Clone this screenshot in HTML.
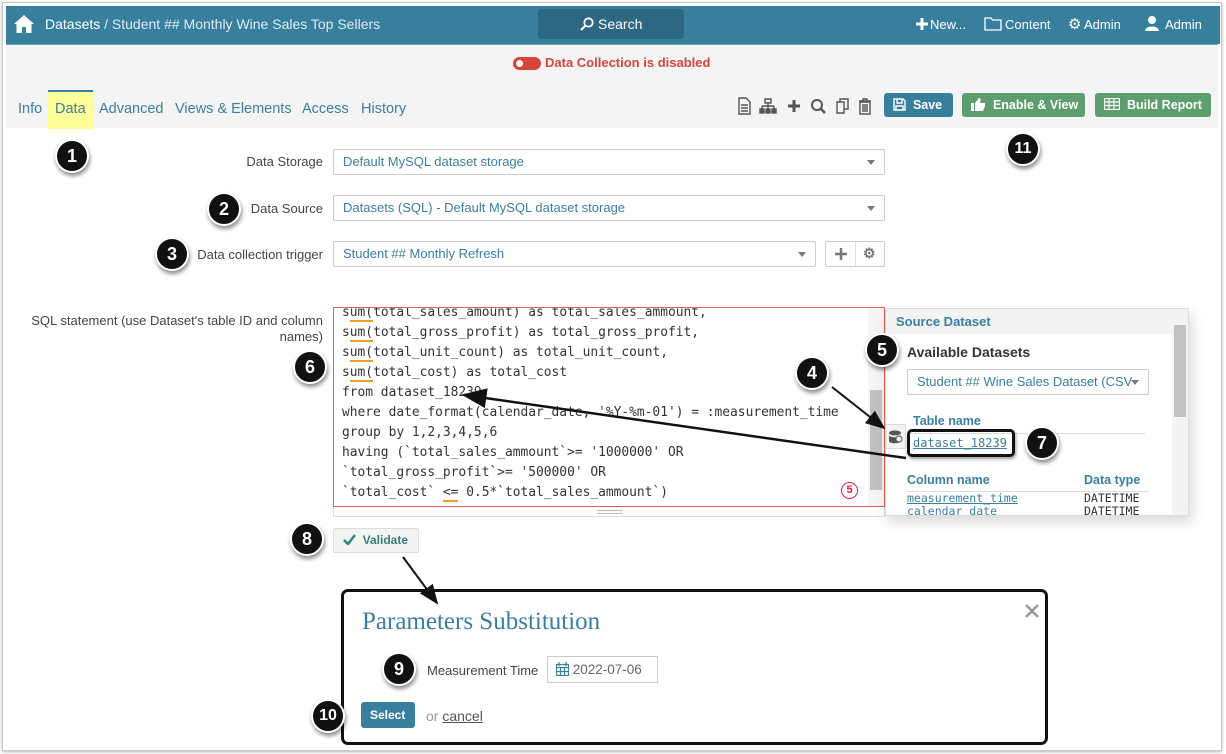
<!DOCTYPE html>
<html><head><meta charset="utf-8"><style>
*{box-sizing:border-box;margin:0;padding:0}
body{width:1226px;height:754px;background:#fff;font-family:"Liberation Sans",sans-serif;position:relative;overflow:hidden;font-size:13px;color:#444}
.abs{position:absolute}
.frame{left:2px;top:2px;width:1220px;height:749px;border:1px solid #c8c8c8;box-shadow:0 1px 3px rgba(0,0,0,.3)}
.top{left:6px;top:6px;width:1214px;height:38px;background:#387f9e;color:#fff}
.band{left:6px;top:44px;width:1212px;height:84px;background:#f4f4f4;border-top:1px solid #6aa}
.c{position:absolute;width:34px;height:34px;border-radius:50%;background:#111;color:#fff;border:2px solid #fff;box-shadow:1px 3px 4px rgba(0,0,0,.45);font-size:18px;text-align:center;line-height:30px;font-weight:bold}
.sel{position:absolute;height:26px;border:1px solid #ccc;border-radius:2px;background:#fff;color:#3a7fa0;font-size:13px;padding-left:9px;line-height:24px}
.sel:after{content:"";position:absolute;right:9px;top:10px;border:4px solid transparent;border-top:5px solid #777}
.lbl{position:absolute;font-size:13px;color:#444;text-align:right}
.btn{position:absolute;height:24px;border-radius:3px;color:#fff;font-weight:bold;font-size:12.5px;line-height:24px;padding-left:9px}
.code{font-family:"DejaVu Sans Mono","Liberation Mono",monospace;font-size:12.9px;color:#333;line-height:20px;white-space:pre}
.u{border-bottom:2px solid #f0a020}
.tab{position:absolute;top:56px;font-size:14.5px;color:#3a7fa0}
</style></head><body>
<div class="abs frame"></div>
<div class="abs top">
 <svg class="abs" style="left:7px;top:8px" width="22" height="20" viewBox="0 0 22 20"><path d="M11 1 L1 10 L3.5 10 L3.5 19 L9 19 L9 13 L13 13 L13 19 L18.5 19 L18.5 10 L21 10 Z" fill="#fff"/></svg>
 <div class="abs" style="left:39px;top:10px;font-size:14px;color:#dfeaf0"><span style="color:#fff">Datasets</span> / Student ## Monthly Wine Sales Top Sellers</div>
 <div class="abs" style="left:532px;top:3px;width:146px;height:30px;background:#2d6782;border-radius:3px;line-height:30px;font-size:14px">
  <svg class="abs" style="left:42px;top:8px" width="14" height="14" viewBox="0 0 14 14"><circle cx="8.5" cy="5.5" r="4.2" fill="none" stroke="#fff" stroke-width="1.8"/><line x1="5.5" y1="8.5" x2="1" y2="13" stroke="#fff" stroke-width="2"/></svg>
  <span class="abs" style="left:60px;top:0">Search</span></div>
 <svg class="abs" style="left:910px;top:12px" width="12" height="12"><path d="M6 0V12M0 6H12" stroke="#fff" stroke-width="3"/></svg>
 <div class="abs" style="left:924px;top:11px;font-size:13px">New...</div>
 <svg class="abs" style="left:978px;top:10px" width="18" height="15"><path d="M1 2H7L8.5 4H17V14H1Z" fill="none" stroke="#fff" stroke-width="1.3"/></svg>
 <div class="abs" style="left:999px;top:11px;font-size:13px">Content</div>
 <div class="abs" style="left:1062px;top:9px;font-size:15px">⚙</div>
 <div class="abs" style="left:1078px;top:11px;font-size:13px">Admin</div>
 <svg class="abs" style="left:1138px;top:9px" width="16" height="16"><circle cx="8" cy="5" r="4" fill="#fff"/><path d="M1 16C1 10 15 10 15 16Z" fill="#fff"/></svg>
 <div class="abs" style="left:1159px;top:11px;font-size:13px">Admin</div>
</div>
<div class="abs band">
 <div class="abs" style="left:507px;top:12px;width:28px;height:13px;border-radius:7px;background:#d9443a"><div style="position:absolute;left:3px;top:3px;width:7px;height:7px;border-radius:50%;background:#fff"></div></div>
 <div class="abs" style="left:539px;top:10px;color:#d9443a;font-weight:bold;font-size:13px">Data Collection is disabled</div>
 <div class="abs" style="left:42px;top:45px;width:45px;height:39px;background:#ffff99;border-top:2px solid #387f9e"></div>
 <span class="tab" style="left:12px">Info</span>
 <span class="tab" style="left:49px">Data</span>
 <span class="tab" style="left:93px">Advanced</span>
 <span class="tab" style="left:169px">Views &amp; Elements</span>
 <span class="tab" style="left:296px">Access</span>
 <span class="tab" style="left:355px">History</span>
 <svg class="abs" style="left:731px;top:52px" width="140" height="18" viewBox="0 0 140 18" fill="none" stroke="#555" stroke-width="1.4">
  <path d="M2 1H9L13 5V17H2Z M4 8H11 M4 11H11 M4 14H11"/>
  <path d="M28 2H34V6H28Z M31 6V9 M25 9H37 M25 9V12 M31 9V12 M37 9V12" /><rect x="23" y="12" width="4" height="4" fill="#555"/><rect x="29" y="12" width="4" height="4" fill="#555"/><rect x="35" y="12" width="4" height="4" fill="#555"/>
  <path d="M57 3V15 M51 9H63" stroke-width="3"/>
  <circle cx="80" cy="8" r="5" stroke-width="2"/><path d="M84 12L88 16" stroke-width="2.5"/>
  <path d="M100 5H107V16H100Z M103 5V2H111V12H107"/>
  <path d="M122 4H134 M126 4V2H130V4 M123 5H133V17H123Z M126 7V15 M128 7V15 M130 7V15"/>
 </svg>
 <div class="btn" style="left:878px;top:48px;width:69px;background:#387f9e"><svg width="13" height="13" style="vertical-align:-2px"><path d="M1 1H10L12 3V12H1Z M4 1V5H9V1 M3 8H10V12H3Z" fill="none" stroke="#fff" stroke-width="1.4"/></svg>&nbsp;&nbsp;Save</div>
 <div class="btn" style="left:956px;top:48px;width:123px;background:#5e9e6e"><svg width="15" height="13" style="vertical-align:-2px"><rect x="0" y="5" width="3" height="8" fill="#fff"/><path d="M4 5L8 0C10 0 10 2 9 5H14V8L12 13H4Z" fill="#fff"/></svg>&nbsp;&nbsp;Enable &amp; View</div>
 <div class="btn" style="left:1089px;top:48px;width:116px;background:#5e9e6e"><svg width="16" height="12" style="vertical-align:-1px"><path d="M.5 .5H15.5V11.5H.5Z M.5 4H15.5 M.5 7.5H15.5 M5 .5V11.5 M10 .5V11.5" fill="none" stroke="#fff" stroke-width="1.2"/></svg>&nbsp;&nbsp;Build Report</div>
</div>
<div class="lbl" style="left:180px;top:154px;width:143px">Data Storage</div>
<div class="sel" style="left:333px;top:149px;width:552px">Default MySQL dataset storage</div>
<div class="lbl" style="left:180px;top:201px;width:143px">Data Source</div>
<div class="sel" style="left:333px;top:195px;width:552px">Datasets (SQL) - Default MySQL dataset storage</div>
<div class="lbl" style="left:150px;top:247px;width:173px">Data collection trigger</div>
<div class="sel" style="left:333px;top:241px;width:483px">Student ## Monthly Refresh</div>
<div class="abs" style="left:825px;top:241px;width:60px;height:26px;border:1px solid #ccc;border-radius:2px;color:#777;font-weight:bold;font-size:15px">
 <svg class="abs" style="left:9px;top:6px" width="12" height="12"><path d="M6 0V12M0 6H12" stroke="#777" stroke-width="2.5"/></svg>
 <span class="abs" style="left:29px;top:0;height:24px;border-left:1px solid #ddd"></span><span class="abs" style="left:37px;top:3px;font-size:14px">⚙</span></div>
<div class="lbl" style="left:20px;top:313px;width:303px;line-height:16px;font-size:13px">SQL statement (use Dataset's table ID and column names)</div>
<div class="abs" style="left:333px;top:307px;width:552px;height:210px;border:1px solid #ddd;background:#fff"></div>
<div class="abs" style="left:333px;top:307px;width:552px;height:200px;border:1px solid #e06055;overflow:hidden">
 <div class="code abs" style="left:8px;top:-5px">s<span class="u">um(</span>total_sales_amount) as total_sales_ammount,
s<span class="u">um(</span>total_gross_profit) as total_gross_profit,
s<span class="u">um(</span>total_unit_count) as total_unit_count,
s<span class="u">um(</span>total_cost) as total_cost
from dataset_18239
where date_format(calendar_date, '%Y-%m-01') = :measurement_time
group by 1,2,3,4,5,6
having (`total_sales_ammount`&gt;= '1000000' OR
`total_gross_profit`&gt;= '500000' OR
`total_cost` <span class="u">&lt;=</span> 0.5*`total_sales_ammount`)</div>
 <div class="abs" style="right:0;top:0;width:16px;height:198px;background:#f5f5f5"><div style="position:absolute;left:2px;top:82px;width:12px;height:100px;background:#c1c1c1"></div></div>
 <div class="abs" style="left:507px;top:174px;width:17px;height:17px;border:1.5px solid #e0204a;border-radius:50%;color:#e0204a;font-size:11px;font-weight:bold;text-align:center;line-height:14px">5</div>
</div>
<div class="abs" style="left:597px;top:510px;width:25px;border-top:1px solid #bbb;border-bottom:1px solid #bbb;height:4px"></div>
<div class="abs" style="left:885px;top:308px;width:304px;height:208px;background:#fff;border:1px solid #ddd;box-shadow:3px 6px 12px rgba(0,0,0,.15);overflow:hidden">
 <div class="abs" style="left:0;top:0;width:287px;height:25px;background:#f3f3f3;color:#3a7fa0;font-weight:bold;font-size:13px;padding:5px 10px">Source Dataset</div>
 <div class="abs" style="right:0;top:0;width:16px;height:208px;background:#f3f3f3"><div style="position:absolute;left:2px;top:16px;width:12px;height:92px;background:#c1c1c1"></div></div>
 <div class="abs" style="left:21px;top:35px;font-weight:bold;font-size:14px;color:#333">Available Datasets</div>
 <div class="sel" style="left:21px;top:60px;width:242px;font-size:13px;overflow:hidden;white-space:nowrap">Student ## Wine Sales Dataset (CSV</div>
 <div class="abs" style="left:27px;top:105px;color:#3a7fa0;font-weight:bold;font-size:12.5px">Table name</div>
 <div class="abs" style="left:21px;top:124px;width:238px;border-top:1px solid #ddd"></div>
 <div class="abs code" style="left:27px;top:124px;color:#3a7fa0;text-decoration:underline;font-size:12px">dataset_18239</div>
 <div class="abs" style="left:21px;top:164px;color:#3a7fa0;font-weight:bold;font-size:12.5px">Column name</div>
 <div class="abs" style="left:198px;top:164px;color:#3a7fa0;font-weight:bold;font-size:12.5px">Data type</div>
 <div class="abs" style="left:21px;top:182px;width:242px;border-top:1px solid #ddd"></div>
 <div class="abs code" style="left:21px;top:183px;font-size:11.5px;line-height:13px;color:#3a7fa0;text-decoration:underline">measurement_time
calendar_date</div>
 <div class="abs code" style="left:198px;top:183px;font-size:11.5px;line-height:13px">DATETIME
DATETIME</div>
</div>
<div class="abs" style="left:885px;top:424px;width:21px;height:25px;background:#f3f3f3;border:1px solid #ddd">
 <svg class="abs" style="left:2px;top:5px" width="16" height="14"><ellipse cx="7" cy="3" rx="6" ry="2.5" fill="#555"/><path d="M1 5V11C1 14 13 14 13 11V5C13 8 1 8 1 5Z" fill="#555"/><circle cx="11" cy="9" r="3" fill="#eee" stroke="#555"/></svg></div>
<div class="abs" style="left:907px;top:429px;width:108px;height:28px;border:3px solid #111;border-radius:5px;box-shadow:1px 2px 3px rgba(0,0,0,.4)"></div>
<div class="abs" style="left:333px;top:528px;width:86px;height:25px;background:#f3f3f3;border:1px solid #ddd;border-radius:2px;font-size:12px;font-weight:bold;color:#387f7a;line-height:23px;padding-left:9px"><svg width="13" height="11" style="vertical-align:-1px"><path d="M1 6L5 10L12 1" fill="none" stroke="#2a8a7a" stroke-width="2.5"/></svg>&nbsp; Validate</div>
<div class="abs" style="left:341px;top:589px;width:707px;height:156px;border:3px solid #111;border-radius:7px;background:#fff">
 <div class="abs" style="left:18px;top:16px;font-family:'Liberation Serif',serif;font-size:25px;color:#3a7fa0">Parameters Substitution</div>
 <svg class="abs" style="right:6px;top:12px" width="14" height="14"><path d="M1 1L13 13M13 1L1 13" stroke="#999" stroke-width="2.5"/></svg>
 <div class="abs" style="left:83px;top:71px;font-size:13px;color:#444">Measurement Time</div>
 <div class="abs" style="left:203px;top:64px;width:111px;height:27px;border:1px solid #ccc;color:#666;font-size:13.5px;line-height:25px;padding-left:8px"><svg width="13" height="14" style="vertical-align:-2px"><path d="M.5 2.5H12.5V13.5H.5Z M.5 5.5H12.5 M3 0V4 M10 0V4 M4.5 5.5V13.5 M8.5 5.5V13.5 M.5 9.5H12.5" fill="none" stroke="#3a7fa0" stroke-width="1.2"/></svg> 2022-07-06</div>
 <div class="btn" style="left:17px;top:110px;width:54px;height:26px;background:#387f9e;line-height:26px;padding-left:9px;font-size:12px">Select</div>
 <div class="abs" style="left:82px;top:116px;color:#999;font-size:14px">or <span style="color:#555;text-decoration:underline">cancel</span></div>
</div>
<svg class="abs" style="left:0;top:0" width="1226" height="754">
 <defs><marker id="a" markerWidth="10" markerHeight="8" refX="9" refY="4" orient="auto"><path d="M0 0L10 4L0 8z" fill="#111"/></marker></defs>
 <line x1="906" y1="458" x2="464" y2="395" stroke="#111" stroke-width="2.5" marker-end="url(#a)"/>
 <line x1="832" y1="387" x2="884" y2="428" stroke="#111" stroke-width="2" marker-end="url(#a)"/>
 <line x1="403" y1="557" x2="437" y2="603" stroke="#111" stroke-width="2" marker-end="url(#a)"/>
</svg>
<div class="c" style="left:55px;top:139px">1</div>
<div class="c" style="left:207px;top:192px">2</div>
<div class="c" style="left:155px;top:237px">3</div>
<div class="c" style="left:795px;top:356px">4</div>
<div class="c" style="left:865px;top:333px">5</div>
<div class="c" style="left:293px;top:350px">6</div>
<div class="c" style="left:1025px;top:426px">7</div>
<div class="c" style="left:290px;top:522px">8</div>
<div class="c" style="left:382px;top:652px">9</div>
<div class="c" style="left:311px;top:699px;font-size:16px">10</div>
<div class="c" style="left:1006px;top:132px;font-size:16px">11</div>
</body></html>
